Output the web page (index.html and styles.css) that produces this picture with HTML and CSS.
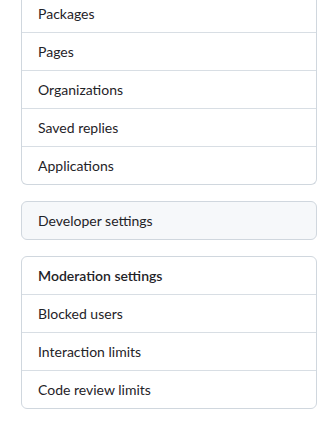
FILE: index.html
```html
<!DOCTYPE html>
<html>
<head>
<meta charset="utf-8">
<link rel="stylesheet" href="styles.css">
</head>
<body>
<div class="sidebar">
  <nav class="menu menu-cut">
    <a class="menu-item">Packages</a>
    <a class="menu-item">Pages</a>
    <a class="menu-item">Organizations</a>
    <a class="menu-item">Saved replies</a>
    <a class="menu-item">Applications</a>
  </nav>
  <nav class="menu menu-muted">
    <a class="menu-item">Developer settings</a>
  </nav>
  <nav class="menu">
    <h3 class="menu-heading">Moderation settings</h3>
    <a class="menu-item">Blocked users</a>
    <a class="menu-item">Interaction limits</a>
    <a class="menu-item">Code review limits</a>
  </nav>
</div>
</body>
</html>
```

FILE: styles.css
```css
html, body {
  margin: 0;
  padding: 0;
  background: #ffffff;
}
body {
  font-family: "Segoe UI", "Lato", "Noto Sans", "Liberation Sans", sans-serif;
  font-size: 14px;
  color: #1f2328;
}
.sidebar {
  width: 296px;
  margin-left: 21px;
  display: flex;
  flex-direction: column;
  gap: 16px;
}
.menu {
  display: flex;
  flex-direction: column;
  border: 1px solid #d0d7de;
  border-radius: 6px;
  background: #ffffff;
}
.menu-cut {
  margin-top: -5px;
  border-top: none;
  border-top-left-radius: 0;
  border-top-right-radius: 0;
}
.menu-muted {
  background: #f6f8fa;
}
.menu-item, .menu-heading {
  display: block;
  padding: 8px 16px;
  line-height: 21px;
  border-bottom: 1px solid #d8dee4;
  margin: 0;
}
.menu-item:last-child {
  border-bottom: none;
}
.menu-heading {
  font-size: 14px;
  font-weight: 600;
}
```
